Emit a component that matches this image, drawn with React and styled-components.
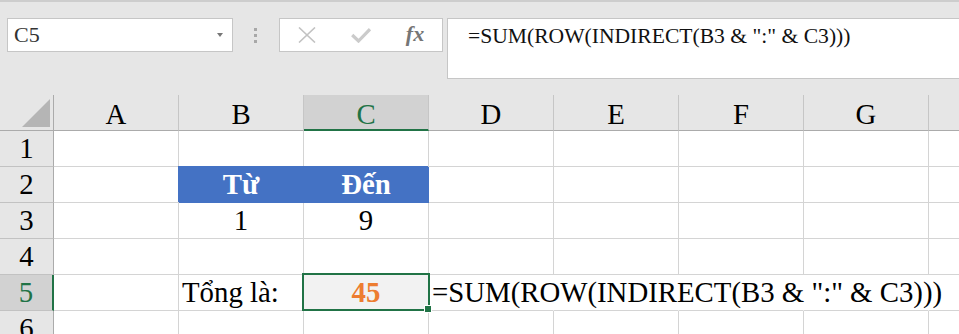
import React from 'react';
import styled, { createGlobalStyle } from 'styled-components';

const SERIF = `"Liberation Serif", "Times New Roman", "DejaVu Serif", serif`;

const Global = createGlobalStyle`
  html, body { margin: 0; padding: 0; width: 959px; height: 334px; overflow: hidden; background: #e6e6e6; }
  body { font-family: ${SERIF}; }
  #root { width: 959px; height: 334px; }
`;

const Page = styled.div`
  width: 959px;
  height: 334px;
  overflow: hidden;
  display: flex;
  flex-direction: column;
  background: #e6e6e6;
  border-top: 2px solid #cdcdcd;
  box-sizing: border-box;
  font-family: ${SERIF};
`;

const FormulaBar = styled.div`
  height: 93px;
  flex: none;
  display: flex;
  align-items: flex-start;
  padding: 16px 0 0 7px;
  box-sizing: border-box;
`;

const NameBox = styled.div`
  width: 226px;
  height: 34px;
  box-sizing: border-box;
  border: 1px solid #c6c6c6;
  background: #fff;
  display: flex;
  align-items: center;
  padding-left: 6px;
  font-family: ${SERIF};
  font-size: 22px;
  line-height: 32px;
  color: #333;
`;

const DropArrow = styled.span`
  margin-left: auto;
  margin-right: 9px;
  width: 0;
  height: 0;
  border-left: 3.5px solid transparent;
  border-right: 3.5px solid transparent;
  border-top: 4px solid #777;
`;

const Grip = styled.div`
  margin: 0 22px 0 21px;
  height: 34px;
  display: flex;
  flex-direction: column;
  justify-content: center;
  gap: 3px;
`;

const GripDot = styled.span`
  width: 3px;
  height: 3px;
  background: #a8a8a8;
`;

const ButtonsBox = styled.div`
  width: 164px;
  height: 34px;
  box-sizing: border-box;
  border: 1px solid #c6c6c6;
  background: #fff;
  display: grid;
  grid-template-columns: 54px 54px 1fr;
  align-items: center;
  justify-items: center;
`;

const Fx = styled.span`
  font-family: ${SERIF};
  font-style: italic;
  font-weight: bold;
  font-size: 22px;
  line-height: 22px;
  color: #767676;
  margin-top: -2px;
`;

const FormulaBox = styled.div`
  flex: 1;
  margin-left: 4px;
  margin-right: -2px;
  height: 61px;
  box-sizing: border-box;
  border: 1px solid #c6c6c6;
  background: #fff;
  padding: 5px 0 0 20px;
  font-family: ${SERIF};
  font-size: 21.6px;
  line-height: 24px;
  color: #111;
  white-space: nowrap;
`;

const Sheet = styled.div`
  flex: 1;
  display: grid;
  grid-template-columns: 54px repeat(8, 125px);
  grid-auto-rows: 36px;
  background: #fff;
  overflow: hidden;
  font-family: ${SERIF};
  font-size: 28.8px;
`;

const Corner = styled.div`
  background: #e6e6e6;
  border-right: 1px solid #ababab;
  border-bottom: 1px solid #ababab;
  box-sizing: border-box;
  display: flex;
  justify-content: flex-end;
  align-items: flex-end;
  padding: 0 3px 3px 0;
`;

const ColHeader = styled.div`
  background: ${p => (p.$active ? '#d2d2d2' : '#e6e6e6')};
  color: ${p => (p.$active ? '#217346' : '#000')};
  border-right: 1px solid #c6c6c6;
  border-bottom: ${p => (p.$active ? '2px solid #217346' : '1px solid #ababab')};
  box-sizing: border-box;
  text-align: center;
  padding-top: 2px;
  line-height: 34px;
  overflow: hidden;
`;

const RowHeader = styled.div`
  background: ${p => (p.$active ? '#d2d2d2' : '#e6e6e6')};
  color: ${p => (p.$active ? '#217346' : '#000')};
  border-right: ${p => (p.$active ? '2px solid #217346' : '1px solid #ababab')};
  border-bottom: 1px solid #c2c2c2;
  box-sizing: border-box;
  text-align: center;
  line-height: 35px;
`;

const Cell = styled.div`
  position: relative;
  box-sizing: border-box;
  border-right: 1px solid ${p => (p.$noRight ? 'transparent' : p.$band ? p.$fill : '#d4d4d4')};
  border-bottom: 1px solid ${p => (p.$band ? p.$fill : '#d4d4d4')};
  background: ${p => p.$fill || 'transparent'};
  box-shadow: ${p => (p.$band ? `-1px -1px 0 0 ${p.$fill}` : 'none')};
  color: ${p => p.$color || '#000'};
  font-weight: ${p => (p.$bold ? 'bold' : 'normal')};
  text-align: ${p => p.$align || 'left'};
  padding: 0 ${p => (p.$align === 'center' ? '0' : '3px')};
  line-height: 35px;
  white-space: nowrap;
  overflow: visible;
  z-index: ${p => (p.$overflow ? 1 : 'auto')};
`;

const Selection = styled.div`
  position: absolute;
  left: -2px;
  top: -2px;
  right: -2px;
  bottom: -1px;
  border: 2px solid #217346;
  z-index: 2;
  pointer-events: none;
`;

const FillHandle = styled.span`
  position: absolute;
  right: -4px;
  bottom: -4px;
  width: 6px;
  height: 6px;
  background: #217346;
  border: 1px solid #fff;
  box-sizing: content-box;
`;

const FORMULA = '=SUM(ROW(INDIRECT(B3 & ":" & C3)))';
const COLS = ['A', 'B', 'C', 'D', 'E', 'F', 'G', 'H'];
const VISIBLE_LABELS = ['A', 'B', 'C', 'D', 'E', 'F', 'G'];
const BLUE = '#4472c4';

const DATA = {
  '2B': { text: 'Từ', bold: true, color: '#fff', fill: BLUE, band: true, align: 'center' },
  '2C': { text: 'Đến', bold: true, color: '#fff', fill: BLUE, band: true, align: 'center' },
  '3B': { text: '1', align: 'center' },
  '3C': { text: '9', align: 'center' },
  '5B': { text: 'Tổng là:' },
  '5C': { text: '45', bold: true, color: '#ed7d31', fill: '#f2f2f2', align: 'center', selected: true },
  '5D': { text: FORMULA, noRight: true, overflow: true },
  '5E': { noRight: true },
  '5F': { noRight: true },
  '5G': { noRight: true },
};

export default function App() {
  return (
    <Page>
      <Global />
      <FormulaBar>
        <NameBox>
          C5
          <DropArrow />
        </NameBox>
        <Grip>
          <GripDot />
          <GripDot />
          <GripDot />
        </Grip>
        <ButtonsBox>
          <svg width="18" height="16" viewBox="0 0 18 16">
            <path d="M1 0.5 L17 15.5 M17 0.5 L1 15.5" stroke="#c2c2c2" strokeWidth="1.6" fill="none" />
          </svg>
          <svg width="20" height="15" viewBox="0 0 20 15">
            <path d="M1.2 7 L7.5 13 L19 1.2" stroke="#cbcbcb" strokeWidth="3.2" fill="none" />
          </svg>
          <Fx>fx</Fx>
        </ButtonsBox>
        <FormulaBox>{FORMULA}</FormulaBox>
      </FormulaBar>
      <Sheet>
        <Corner>
          <svg width="28" height="28" viewBox="0 0 28 28">
            <polygon points="28,0 28,28 0,28" fill="#b5b5b5" />
          </svg>
        </Corner>
        {COLS.map(c => (
          <ColHeader key={c} $active={c === 'C'}>
            {VISIBLE_LABELS.includes(c) ? c : ''}
          </ColHeader>
        ))}
        {[1, 2, 3, 4, 5, 6].map(r => (
          <React.Fragment key={r}>
            <RowHeader $active={r === 5}>{r}</RowHeader>
            {COLS.map(c => {
              const d = DATA[`${r}${c}`] || {};
              return (
                <Cell
                  key={c}
                  $fill={d.fill}
                  $band={d.band}
                  $color={d.color}
                  $bold={d.bold}
                  $align={d.align}
                  $noRight={d.noRight}
                  $overflow={d.overflow}
                >
                  {d.text}
                  {d.selected && (
                    <Selection>
                      <FillHandle />
                    </Selection>
                  )}
                </Cell>
              );
            })}
          </React.Fragment>
        ))}
      </Sheet>
    </Page>
  );
}
